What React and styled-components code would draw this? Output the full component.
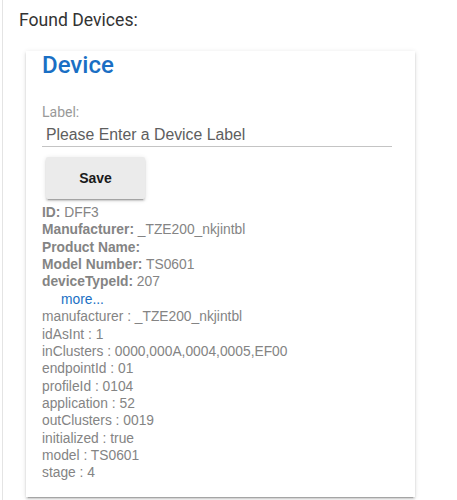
import React from 'react';
import styled, { createGlobalStyle } from 'styled-components';

const GlobalStyle = createGlobalStyle`
  html, body {
    margin: 0;
    padding: 0;
    background: #fff;
    font-family: Roboto, "Liberation Sans", sans-serif;
  }
`;

const Page = styled.div`
  margin-left: 2px;
  min-height: 500px;
  border-left: 1px solid #e4e4e4;
  padding: 10px 0 0 16px;
  box-sizing: border-box;
`;

const Heading = styled.div`
  font-size: 17.6px;
  color: #333;
  line-height: 21px;
  margin-bottom: 20px;
`;

const Card = styled.div`
  width: 389px;
  margin-left: 7px;
  box-sizing: border-box;
  padding: 0 23px 15px 16px;
  background: #fff;
  box-shadow: 0 3px 1px -2px rgba(0,0,0,.2), 0 2px 2px 0 rgba(0,0,0,.14), 0 1px 5px 0 rgba(0,0,0,.12);
`;

const Title = styled.h2`
  margin: 0;
  font-size: 24px;
  font-weight: 500;
  line-height: 28px;
  color: #1a6fc4;
`;

const FieldLabel = styled.div`
  margin-top: 25px;
  font-size: 14px;
  line-height: 16px;
  color: #999;
`;

const TextInput = styled.input`
  display: block;
  width: 100%;
  box-sizing: border-box;
  margin-top: 2px;
  padding: 3px 4px 2px 4px;
  border: none;
  border-bottom: 1px solid #c4c4c4;
  font-family: "Liberation Sans", Arial, sans-serif;
  font-size: 15.8px;
  line-height: 19px;
  color: #555;
  outline: none;
  &::placeholder { color: #5e5e5e; }
`;

const Button = styled.button`
  display: block;
  width: 99px;
  height: 42px;
  margin: 10px 0 5px 4px;
  border: none;
  border-radius: 2px;
  background: #ebebeb;
  font-family: "Liberation Sans", Arial, sans-serif;
  font-size: 14px;
  font-weight: 700;
  color: #1a1a1a;
  box-shadow: 0 2px 2px 0 rgba(0,0,0,.14), 0 3px 1px -2px rgba(0,0,0,.2), 0 1px 5px 0 rgba(0,0,0,.12);
`;

const Details = styled.div`
  font-family: "Liberation Sans", Arial, sans-serif;
  font-size: 13.8px;
  line-height: 17.36px;
  color: #848484;
`;

const Line = styled.div`
  white-space: nowrap;
`;

const Key = styled.b`
  font-weight: 700;
`;

const More = styled.a`
  display: block;
  margin-left: 19px;
  color: #1a6fc4;
  text-decoration: none;
`;

const main = [
  ['ID:', 'DFF3'],
  ['Manufacturer:', '_TZE200_nkjintbl'],
  ['Product Name:', ''],
  ['Model Number:', 'TS0601'],
  ['deviceTypeId:', '207'],
];

const extra = [
  ['manufacturer', '_TZE200_nkjintbl'],
  ['idAsInt', '1'],
  ['inClusters', '0000,000A,0004,0005,EF00'],
  ['endpointId', '01'],
  ['profileId', '0104'],
  ['application', '52'],
  ['outClusters', '0019'],
  ['initialized', 'true'],
  ['model', 'TS0601'],
  ['stage', '4'],
];

export default function App() {
  return (
    <>
      <GlobalStyle />
      <Page>
        <Heading>Found Devices:</Heading>
        <Card>
          <Title>Device</Title>
          <FieldLabel>Label:</FieldLabel>
          <TextInput type="text" placeholder="Please Enter a Device Label" />
          <Button>Save</Button>
          <Details>
            {main.map(([k, v]) => (
              <Line key={k}>
                <Key>{k}</Key> {v}
              </Line>
            ))}
            <More href="#">more...</More>
            {extra.map(([k, v]) => (
              <Line key={k}>{k} : {v}</Line>
            ))}
          </Details>
        </Card>
      </Page>
    </>
  );
}
